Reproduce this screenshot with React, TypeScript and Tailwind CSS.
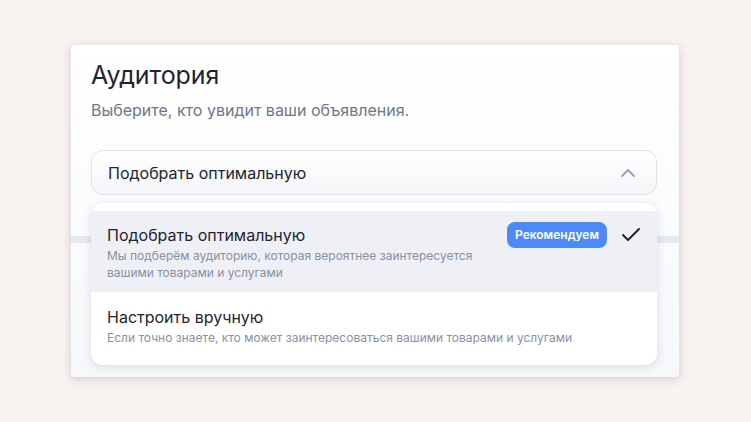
import { ChevronUp, Check } from "lucide-react";

const font = { fontFamily: "Inter, 'Noto Sans', sans-serif" };

const options = [
  {
    title: "Подобрать оптимальную",
    desc: "Мы подберём аудиторию, которая вероятнее заинтересуется вашими товарами и услугами",
    active: true,
  },
  {
    title: "Настроить вручную",
    desc: "Если точно знаете, кто может заинтересоваться вашими товарами и услугами",
    active: false,
  },
];

export default function App() {
  return (
    <div
      className="min-h-screen bg-[#f8f2f1] pt-[45px] pl-[71px]"
      style={font}
    >
      <div className="w-[608px] h-[332px] rounded bg-gradient-to-b from-white to-[#f7f8fb] shadow-[0_2px_10px_rgba(30,30,50,0.18)] pl-5 pr-[22px] pt-[14px]">
        <h1 className="text-[25px] leading-8 text-[#1f2430] tracking-[-0.1px]">
          Аудитория
        </h1>
        <p className="mt-[7px] text-[16px] leading-6 text-[#6e778a]">
          Выберите, кто увидит ваши объявления.
        </p>

        <div className="relative mt-[28px]">
          <div className="h-[45px] rounded-xl border border-[#dfe2e9] bg-gradient-to-b from-white to-[#f4f5f8] flex items-center justify-between pl-4 pr-[16px]">
            <span className="text-[16px] text-[#1f2430]">Подобрать оптимальную</span>
            <ChevronUp className="w-6 h-6 text-[#9aa1ad]" strokeWidth={1.8} />
          </div>

          <div className="-ml-5 -mr-[22px] mt-[41px] h-[7px] bg-[#e6e9ef]" />

          <div className="absolute left-0 right-0 top-[53px] rounded-xl bg-white shadow-[0_2px_10px_rgba(30,40,70,0.14)] py-2">
            {options.map((o) => (
              <div
                key={o.title}
                className={
                  o.active
                    ? "bg-[#eef0f5] pl-4 pr-[14px] pt-[14px] pb-[11px] flex"
                    : "bg-white pl-4 pr-[14px] pt-[15px] pb-[11px] flex"
                }
              >
                <div className="flex-1">
                  <div className="text-[16px] leading-5 text-[#1f2430]">{o.title}</div>
                  <div
                    className={
                      o.active
                        ? "mt-[2px] text-[12px] leading-[17px] text-[#8a91a1] max-w-[390px]"
                        : "mt-[2px] text-[12px] leading-[17px] text-[#8a91a1]"
                    }
                  >
                    {o.desc}
                  </div>
                </div>
                {o.active && (
                  <div className="flex items-start gap-3 -mt-[3px]">
                    <span className="rounded-lg bg-[#4d8af7] px-2 h-[26px] flex items-center text-[12px] font-semibold text-white">
                      Рекомендуем
                    </span>
                    <Check className="w-6 h-6 text-[#23262e] mt-[1px]" strokeWidth={2} />
                  </div>
                )}
              </div>
            ))}
          </div>
        </div>
      </div>
    </div>
  );
}
